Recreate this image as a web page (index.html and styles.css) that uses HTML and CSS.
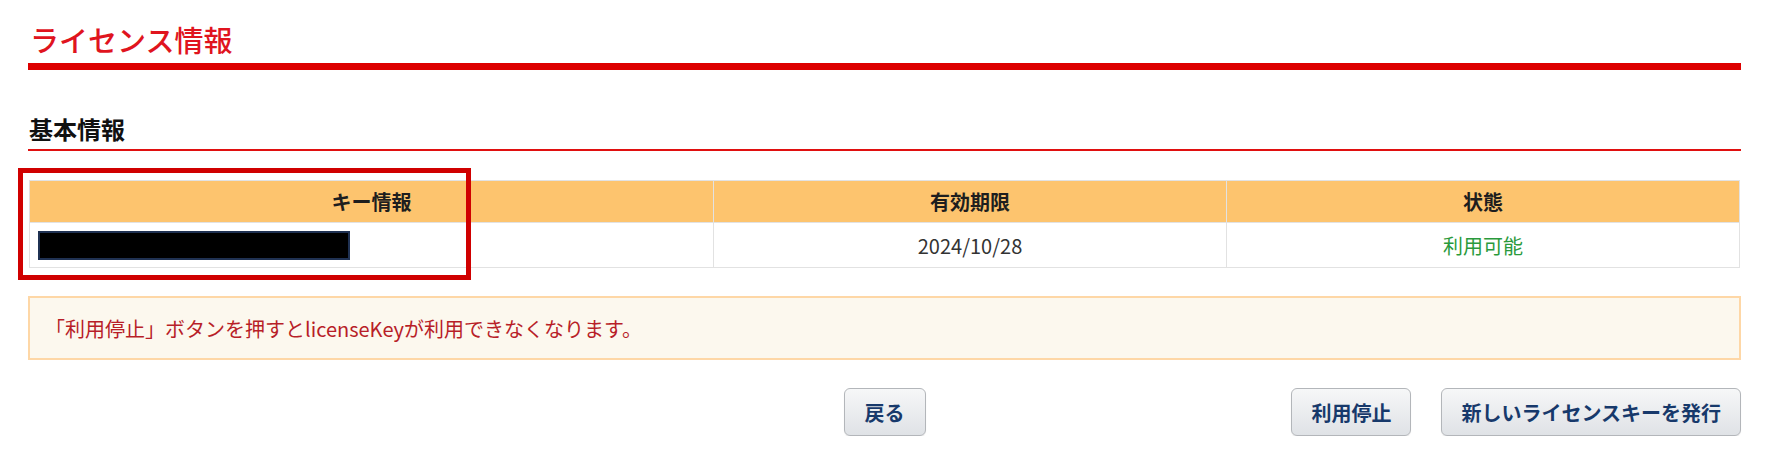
FILE: index.html
```html
<!DOCTYPE html>
<html lang="ja">
<head>
<meta charset="utf-8">
<title>ライセンス情報</title>
<link rel="stylesheet" href="styles.css">
</head>
<body>
<div class="page">
  <h1 class="page-title">ライセンス情報</h1>
  <h2 class="section-title">基本情報</h2>
  <div class="table-wrap">
    <table class="info-table">
      <thead>
        <tr>
          <th class="col-key">キー情報</th>
          <th class="col-date">有効期限</th>
          <th class="col-status">状態</th>
        </tr>
      </thead>
      <tbody>
        <tr>
          <td class="cell-key"><span class="redacted"></span></td>
          <td class="cell-center">2024/10/28</td>
          <td class="cell-center status-ok">利用可能</td>
        </tr>
      </tbody>
    </table>
    <div class="highlight-box"></div>
  </div>
  <div class="notice">「利用停止」ボタンを押すとlicenseKeyが利用できなくなります。</div>
  <div class="actions">
    <div class="actions-left"></div>
    <button class="btn btn-back" type="button">戻る</button>
    <div class="actions-right">
      <button class="btn" type="button">利用停止</button>
      <button class="btn" type="button">新しいライセンスキーを発行</button>
    </div>
  </div>
</div>
</body>
</html>
```

FILE: styles.css
```css
* {
  box-sizing: border-box;
}

html, body {
  margin: 0;
  padding: 0;
  background: #ffffff;
}

body {
  font-family: "Noto Sans CJK JP", "Noto Sans", sans-serif;
  color: #222;
}

.page {
  width: 1713px;
  margin-left: 28px;
  padding-top: 25px;
}

.page-title {
  margin: 0;
  font-size: 29px;
  line-height: 29px;
  font-weight: 500;
  color: #e0141e;
  padding-left: 2px;
  padding-bottom: 9px;
  border-bottom: 7px solid #dd0000;
}

.section-title {
  margin: 47px 0 0 0;
  font-size: 24px;
  line-height: 24px;
  font-weight: bold;
  color: #111;
  padding-left: 1px;
  padding-bottom: 8px;
  border-bottom: 2px solid #e01010;
}

.table-wrap {
  position: relative;
  margin-top: 29px;
}

.info-table {
  width: calc(100% - 2px);
  margin: 0 1px;
  border-collapse: collapse;
  font-size: 20px;
}

.info-table th,
.info-table td {
  border: 1px solid #e2e2e2;
  padding: 0;
}

.info-table th {
  background: #fdc46e;
  color: #1e1e1e;
  font-weight: bold;
  height: 42px;
  text-align: center;
}

.col-key {
  width: 40%;
}

.col-date,
.col-status {
  width: 30%;
}

.info-table td {
  height: 45px;
  color: #333;
}

.info-table td.cell-key {
  padding-left: 8px;
}

.cell-center {
  text-align: center;
}

.info-table td.status-ok {
  color: #2a9a3c;
}

.redacted {
  display: block;
  width: 312px;
  height: 29px;
  background: #000;
  border: 2px solid #1f3152;
}

.highlight-box {
  position: absolute;
  left: -10px;
  top: -12px;
  width: 453px;
  height: 112px;
  border: 5px solid #d00000;
  pointer-events: none;
}

.notice {
  margin-top: 28px;
  height: 64px;
  display: flex;
  align-items: center;
  padding-left: 15px;
  background: #fcf8ee;
  border: 2px solid #fed7a6;
  color: #b81e28;
  font-size: 20px;
}

.actions {
  margin-top: 28px;
  display: grid;
  grid-template-columns: 1fr auto 1fr;
  align-items: center;
}

.actions-right {
  display: flex;
  justify-content: flex-end;
  gap: 30px;
}

.btn {
  height: 48px;
  padding: 0 19px;
  font-family: "Noto Sans CJK JP", "Noto Sans", sans-serif;
  font-size: 20px;
  font-weight: bold;
  color: #17396b;
  background: linear-gradient(#f6f7f8, #dfe2e6);
  border: 1px solid #b3b6ba;
  border-radius: 6px;
  box-shadow: 0 1px 1px rgba(0, 0, 0, 0.08);
  cursor: pointer;
}

.btn-back {
  padding: 0 20px;
}
```
